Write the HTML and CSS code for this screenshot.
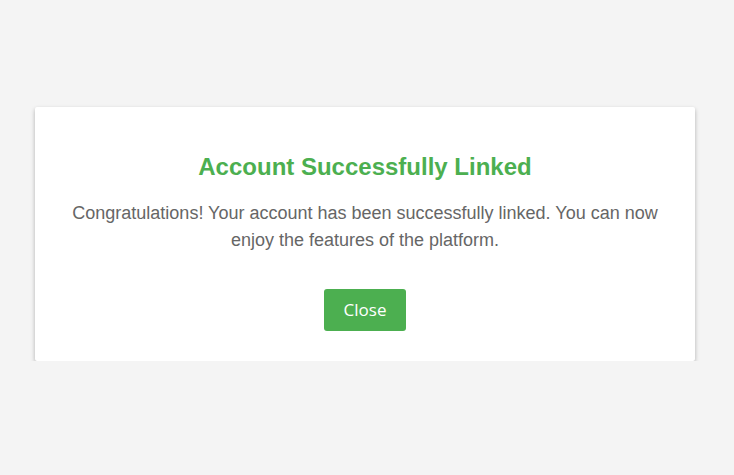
FILE: index.html
```html
<!DOCTYPE html>
<html lang="en">
<head>
<meta charset="utf-8">
<title>Account Successfully Linked</title>
<link rel="stylesheet" href="styles.css">
</head>
<body>
<div class="page">
  <div class="card">
    <h2 class="title">Account Successfully Linked</h2>
    <p class="message">Congratulations! Your account has been successfully linked. You can now enjoy the features of the platform.</p>
    <button class="close-btn" type="button">Close</button>
  </div>
</div>
</body>
</html>
```
FILE: styles.css
```css
html, body {
  margin: 0;
  padding: 0;
  background: #f4f4f4;
}
body {
  font-family: "Liberation Sans", Arial, sans-serif;
}
.page {
  padding: 107px 0 0 35px;
}
.card {
  box-sizing: border-box;
  width: 660px;
  height: 254px;
  background: #fff;
  border-radius: 2px;
  box-shadow: 0 2px 4px rgba(0, 0, 0, 0.28);
  padding: 26px 30px 30px;
  text-align: center;
}
.title {
  margin: 20px 0 19px;
  font-size: 24px;
  font-weight: bold;
  color: #4caf50;
}
.message {
  margin: 0 0 35px;
  font-size: 18px;
  line-height: 27px;
  color: #666;
}
.close-btn {
  font-family: "Open Sans", "DejaVu Sans", sans-serif;
  font-size: 17px;
  line-height: 22px;
  height: 42px;
  padding: 10px 20px;
  border: none;
  border-radius: 3px;
  background: #4caf50;
  color: #fff;
  cursor: pointer;
}
```
